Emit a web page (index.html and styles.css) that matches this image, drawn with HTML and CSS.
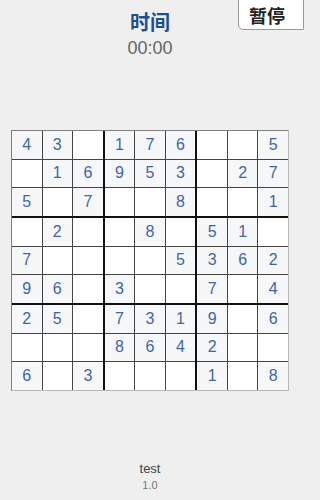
FILE: index.html
```html
<!DOCTYPE html>
<html lang="zh">
<head>
<meta charset="utf-8">
<link rel="stylesheet" href="styles.css">
</head>
<body>
<div class="page">
  <header class="header">
    <div class="title">时间</div>
    <div class="timer">00:00</div>
    <button class="pause">暂停</button>
  </header>
  <div class="board">
    <div class="box">
      <div class="cell g">4</div><div class="cell g">3</div><div class="cell"></div>
      <div class="cell"></div><div class="cell g">1</div><div class="cell g">6</div>
      <div class="cell g">5</div><div class="cell"></div><div class="cell g">7</div>
    </div>
    <div class="box">
      <div class="cell g">1</div><div class="cell g">7</div><div class="cell g">6</div>
      <div class="cell g">9</div><div class="cell g">5</div><div class="cell g">3</div>
      <div class="cell"></div><div class="cell"></div><div class="cell g">8</div>
    </div>
    <div class="box">
      <div class="cell"></div><div class="cell"></div><div class="cell g">5</div>
      <div class="cell"></div><div class="cell g">2</div><div class="cell g">7</div>
      <div class="cell"></div><div class="cell"></div><div class="cell g">1</div>
    </div>
    <div class="box">
      <div class="cell"></div><div class="cell g">2</div><div class="cell"></div>
      <div class="cell g">7</div><div class="cell"></div><div class="cell"></div>
      <div class="cell g">9</div><div class="cell g">6</div><div class="cell"></div>
    </div>
    <div class="box">
      <div class="cell"></div><div class="cell g">8</div><div class="cell"></div>
      <div class="cell"></div><div class="cell"></div><div class="cell g">5</div>
      <div class="cell g">3</div><div class="cell"></div><div class="cell"></div>
    </div>
    <div class="box">
      <div class="cell g">5</div><div class="cell g">1</div><div class="cell"></div>
      <div class="cell g">3</div><div class="cell g">6</div><div class="cell g">2</div>
      <div class="cell g">7</div><div class="cell"></div><div class="cell g">4</div>
    </div>
    <div class="box">
      <div class="cell g">2</div><div class="cell g">5</div><div class="cell"></div>
      <div class="cell"></div><div class="cell"></div><div class="cell"></div>
      <div class="cell g">6</div><div class="cell"></div><div class="cell g">3</div>
    </div>
    <div class="box">
      <div class="cell g">7</div><div class="cell g">3</div><div class="cell g">1</div>
      <div class="cell g">8</div><div class="cell g">6</div><div class="cell g">4</div>
      <div class="cell"></div><div class="cell"></div><div class="cell"></div>
    </div>
    <div class="box">
      <div class="cell g">9</div><div class="cell"></div><div class="cell g">6</div>
      <div class="cell g">2</div><div class="cell"></div><div class="cell"></div>
      <div class="cell g">1</div><div class="cell"></div><div class="cell g">8</div>
    </div>
  </div>
  <footer class="footer">
    <div class="app-name">test</div>
    <div class="version">1.0</div>
  </footer>
</div>
</body>
</html>
```
FILE: styles.css
```css
html, body {
  margin: 0;
  padding: 0;
  background: #efefef;
}
body {
  font-family: "Liberation Sans", "Noto Sans CJK SC", sans-serif;
}
.page {
  width: 300px;
  height: 500px;
  display: flex;
  flex-direction: column;
  align-items: center;
}
.header {
  position: relative;
  width: 100%;
  display: flex;
  flex-direction: column;
  align-items: center;
  padding-top: 9px;
}
.title {
  font-family: "Noto Sans CJK SC", sans-serif;
  font-weight: 700;
  font-size: 20px;
  line-height: 26px;
  color: #1d4f8f;
}
.timer {
  font-size: 18px;
  line-height: 22px;
  color: #666;
  margin-top: 2px;
}
.pause {
  position: absolute;
  top: -1px;
  right: -4px;
  width: 66px;
  height: 31px;
  padding: 0 0 0 10px;
  background: #fff;
  border: 1px solid #9a9a9a;
  border-bottom-left-radius: 5px;
  font-family: "Noto Sans CJK SC", sans-serif;
  font-weight: 700;
  font-size: 18px;
  line-height: 28px;
  color: #222;
  text-align: left;
}
.board {
  margin-top: 71px;
  width: 276px;
  height: 259px;
  border-top: 1px solid #808080;
  border-left: 1px solid #808080;
  border-right: 1px solid #b8b8b8;
  border-bottom: 1px solid #b8b8b8;
  background: #111;
  display: grid;
  grid-template-columns: repeat(3, 1fr);
  grid-template-rows: repeat(3, 1fr);
  gap: 2px;
}
.box {
  display: grid;
  grid-template-columns: repeat(3, 1fr);
  grid-template-rows: repeat(3, 1fr);
  gap: 1px;
  background: #444;
}
.cell {
  background: #ffffff;
  display: flex;
  align-items: center;
  justify-content: center;
  font-size: 16px;
  color: #3f65a8;
}
.cell.g {
  background: #f6f7f9;
}
.footer {
  margin-top: 70px;
  display: flex;
  flex-direction: column;
  align-items: center;
}
.app-name {
  font-size: 13px;
  line-height: 16px;
  color: #444;
}
.version {
  font-size: 11px;
  line-height: 14px;
  color: #777;
  margin-top: 1px;
}
```
